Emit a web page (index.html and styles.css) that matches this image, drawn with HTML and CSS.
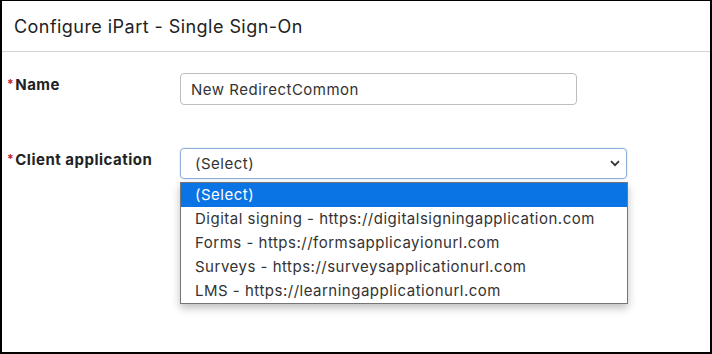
FILE: index.html
```html
<!DOCTYPE html>
<html lang="en">
<head>
    <meta charset="UTF-8">
    <meta name="viewport" content="width=device-width, initial-scale=1.0">
    <title>Configure iPart - Single Sign-On</title>
    <link rel="stylesheet" href="styles.css">
</head>
<body>
    <div class="panel">
        <div class="panel-header">
            <h2>Configure iPart - Single Sign-On</h2>
        </div>

        <div class="panel-body">
            <div class="form-row">
                <label class="field-label" for="name"><span class="req">*</span>Name</label>
                <input type="text" id="name" class="text-input" value="New RedirectCommon">
            </div>

            <div class="form-row row-client">
                <label class="field-label"><span class="req">*</span>Client application</label>
                <div class="select-wrap">
                    <div class="select-box">
                        <span>(Select)</span>
                        <svg class="chevron" width="10" height="7" viewBox="0 0 10 7">
                            <path d="M1 1.2 L5 5.2 L9 1.2" fill="none" stroke="#333" stroke-width="1.8"/>
                        </svg>
                    </div>
                    <ul class="select-menu">
                        <li class="active">(Select)</li>
                        <li>Digital signing - https://digitalsigningapplication.com</li>
                        <li>Forms - https://formsapplicayionurl.com</li>
                        <li>Surveys - https://surveysapplicationurl.com</li>
                        <li>LMS - https://learningapplicationurl.com</li>
                    </ul>
                </div>
            </div>
        </div>
    </div>
</body>
</html>
```

FILE: styles.css
```css
html, body {
    margin: 0;
    padding: 0;
    background-color: #fff;
}

body {
    font-family: Inter, "Noto Sans", sans-serif;
    color: #333;
}

.panel {
    width: 712px;
    height: 354px;
    box-sizing: border-box;
    border: 2px solid #000;
    border-top-width: 1px;
    background-color: #fff;
}

.panel-header {
    height: 50px;
    border-bottom: 1px solid #d4d4d4;
    display: flex;
    align-items: center;
    padding-left: 12px;
}

.panel-header h2 {
    margin: 0;
    font-size: 18px;
    font-weight: 400;
    color: #222;
    letter-spacing: 0.45px;
}

.panel-body {
    padding-top: 21px;
}

.form-row {
    display: grid;
    grid-template-columns: 178px 397px;
    align-items: start;
}

.row-client {
    grid-template-columns: 178px 447px;
    margin-top: 43px;
}

.field-label {
    font-size: 15px;
    font-weight: 700;
    color: #222;
    padding-left: 5px;
    padding-top: 2px;
    letter-spacing: 0.5px;
}

.req {
    color: #c0212b;
    font-size: 12px;
    margin-right: 1px;
    vertical-align: 2px;
}

.text-input {
    height: 32px;
    box-sizing: border-box;
    border: 1px solid #bdbdbd;
    border-radius: 4px;
    padding: 0 10px;
    font-family: inherit;
    font-size: 15px;
    letter-spacing: 0.5px;
    color: #333;
}

.select-wrap {
    position: relative;
}

.select-box {
    height: 31px;
    box-sizing: border-box;
    border: 1px solid #8fb1d9;
    border-radius: 4px;
    box-shadow: 0 0 2px rgba(70, 130, 200, 0.35);
    display: flex;
    align-items: center;
    justify-content: space-between;
    padding: 0 6px 0 14px;
    font-size: 15px;
    letter-spacing: 0.5px;
    color: #333;
}

.select-menu {
    position: absolute;
    top: 34px;
    left: 0;
    width: 448px;
    margin: 0;
    padding: 0;
    list-style: none;
    box-sizing: border-box;
    background-color: #fff;
    border: 1px solid #767676;
    box-shadow: 0 4px 8px rgba(0, 0, 0, 0.25);
}

.select-menu li {
    height: 24px;
    line-height: 24px;
    padding-left: 14px;
    font-size: 15px;
    letter-spacing: 0.5px;
    color: #333;
}

.select-menu li.active {
    background-color: #0b74e5;
    color: #fff;
}
```
